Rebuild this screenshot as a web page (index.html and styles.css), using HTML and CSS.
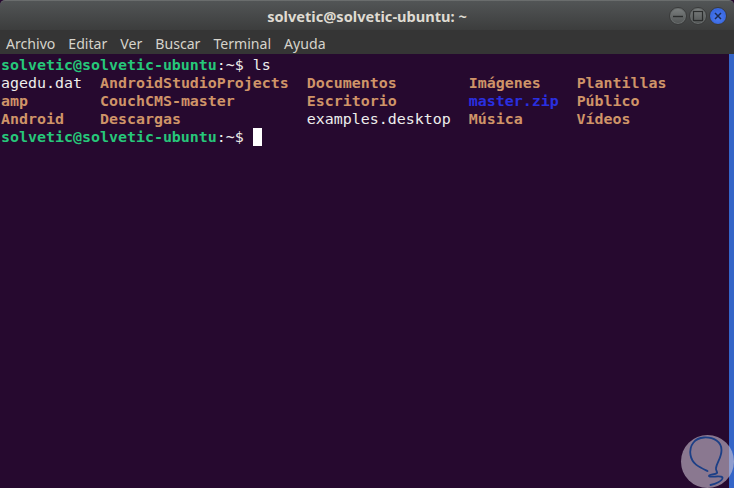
FILE: index.html
```html
<!DOCTYPE html>
<html lang="es">
<head>
<meta charset="utf-8">
<title>solvetic@solvetic-ubuntu: ~</title>
<link rel="stylesheet" href="styles.css">
</head>
<body>
<div class="window">
  <header class="titlebar">
    <span class="title">solvetic@solvetic-ubuntu: ~</span>
    <div class="controls">
      <span class="btn"><svg width="16" height="16" viewBox="0 0 16 16"><path d="M3 8.500h10" stroke="#2b2d2d" stroke-width="1.4"/></svg></span>
      <span class="btn"><svg width="16" height="16" viewBox="0 0 16 16"><rect x="3.500" y="3.500" width="9" height="9" fill="none" stroke="#2b2d2d" stroke-width="1.200"/></svg></span>
      <span class="btn close"><svg width="16" height="16" viewBox="0 0 16 16"><path d="M5 5l6 6M11 5l-6 6" stroke="#1b2b55" stroke-width="1.500"/></svg></span>
    </div>
  </header>
  <nav class="menubar">
    <span>Archivo</span><span>Editar</span><span>Ver</span><span>Buscar</span><span>Terminal</span><span>Ayuda</span>
  </nav>
  <main class="terminal">
    <div class="output">
      <div class="line"><span class="prompt">solvetic@solvetic-ubuntu</span>:~$ ls</div>
      <div class="line">agedu.dat  <span class="dir">AndroidStudioProjects</span>  <span class="dir">Documentos</span>        <span class="dir">Imágenes</span>    <span class="dir">Plantillas</span></div>
      <div class="line"><span class="dir">amp</span>        <span class="dir">CouchCMS-master</span>        <span class="dir">Escritorio</span>        <span class="zip">master.zip</span>  <span class="dir">Público</span></div>
      <div class="line"><span class="dir">Android</span>    <span class="dir">Descargas</span>              examples.desktop  <span class="dir">Música</span>      <span class="dir">Vídeos</span></div>
      <div class="line"><span class="prompt">solvetic@solvetic-ubuntu</span>:~$ <span class="cursor"> </span></div>
    </div>
    <div class="scrollbar"></div>
  </main>
</div>
<div class="watermark">
  <svg width="53" height="53" viewBox="0 0 53 53"><path d="M26.500 36C18 32 11 29 9.500 20 8 10 14 3 23 2.500 33 2 40.500 7 40.500 15 40.500 23 36 27 35 33 34.500 36 37 37 36 38 34 40 28 39 28 41 29 43 40 40 41.500 42.500 42 46 34 49 29.500 50" fill="none" stroke="#1c3f86" stroke-width="1.800" stroke-linecap="round" stroke-linejoin="round"/></svg>
</div>
</body>
</html>
```
FILE: styles.css
```css
html, body {
  margin: 0;
  height: 100%;
  background: #26092f;
  overflow: hidden;
}
.window {
  display: flex;
  flex-direction: column;
  height: 488px;
  width: 734px;
}
.titlebar {
  flex: 0 0 29px;
  display: flex;
  align-items: center;
  justify-content: flex-end;
  position: relative;
  background: linear-gradient(#525556, #3c3d3d);
  border-top: 1px solid #6a6d6d;
  border-radius: 5px 5px 0 0;
  padding-right: 7px;
}
.title {
  position: absolute;
  left: 0;
  right: 0;
  text-align: center;
  font: 700 14.6px "Noto Sans", sans-serif;
  color: #dfdbd2;
}
.controls {
  display: flex;
  gap: 2px;
}
.btn {
  box-sizing: border-box;
  width: 18px;
  height: 18px;
  border-radius: 50%;
  background: linear-gradient(#7c8080, #505353);
  border: 1px solid #3a3b3b;
  box-shadow: inset 0 0 0 1px #6a6e6e;
  display: flex;
  align-items: center;
  justify-content: center;
}
.btn svg {
  flex: none;
}
.close {
  background: radial-gradient(circle at 50% 60%, #4f7df2, #2b5bd6);
  box-shadow: inset 0 0 0 1px #3d6be0;
}
.menubar {
  flex: 0 0 24px;
  display: flex;
  align-items: center;
  gap: 13px;
  padding: 3px 0 0 6px;
  box-sizing: border-box;
  background: #353535;
  font: 14.1px "Noto Sans", sans-serif;
  color: #d6d3cb;
}
.terminal {
  flex: 1;
  display: flex;
  background: #26092f;
  min-height: 0;
}
.output {
  flex: 1;
  padding: 2px 0 0 1px;
  font: 14.95px/18px "DejaVu Sans Mono", monospace;
  color: #eeeeec;
}
.line {
  height: 18px;
  white-space: pre;
}
.prompt {
  color: #26c77a;
  font-weight: 700;
}
.dir {
  color: #cf9468;
  font-weight: 700;
}
.zip {
  color: #2a2fe0;
  font-weight: 700;
}
.cursor {
  background: #fff;
}
.scrollbar {
  flex: 0 0 5px;
  background: #3465c8;
}
.watermark {
  position: absolute;
  left: 681px;
  top: 435px;
  width: 53px;
  height: 53px;
  border-radius: 50%;
  background: rgba(205, 195, 210, 0.6);
}
.watermark svg {
  display: block;
}
```
